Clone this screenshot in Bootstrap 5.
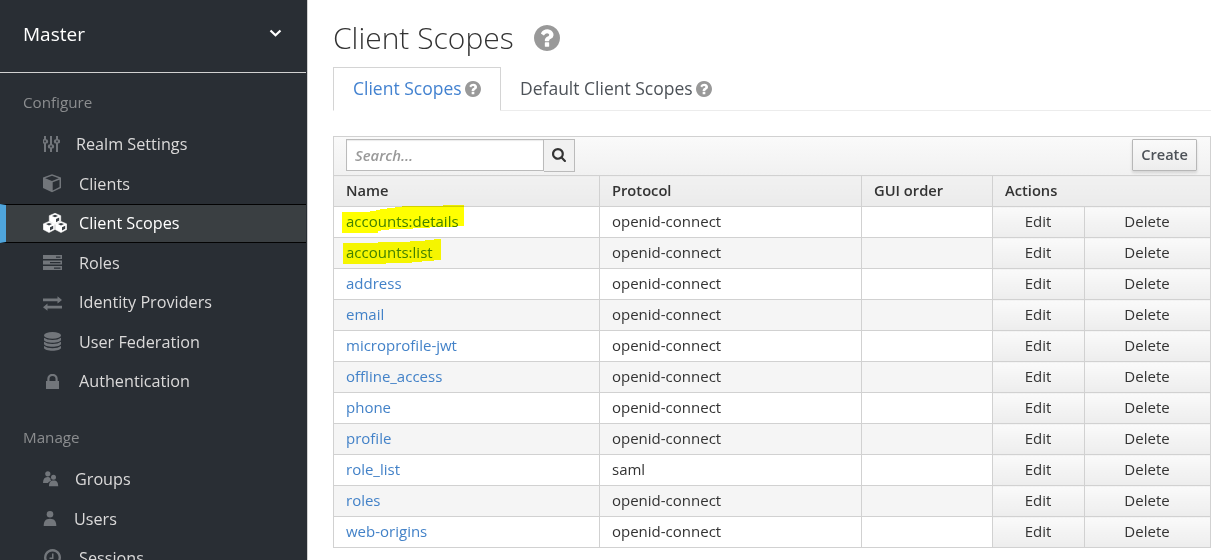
<!DOCTYPE html>
<html lang="en">
<head>
<meta charset="utf-8">
<title>Client Scopes</title>
<link href="https://cdn.jsdelivr.net/npm/bootstrap@5.3.0/dist/css/bootstrap.min.css" rel="stylesheet">
<style>
body{font-family:"Open Sans",sans-serif;height:560px;overflow:hidden;color:#333;font-size:15px;line-height:20px}
svg{display:block;flex:none}
.sidebar{width:308px;height:560px;background:#292e34;border-right:1px solid #d1d1d1;overflow:hidden;color:#dbdada}
.realm{height:73px;width:306px;padding:0 24px 5px 23px;border-bottom:1px solid #d1d1d1;color:#fff;font-size:19px}
.group-title{font-size:15.2px;color:#8b8d8f;padding-left:23px;height:21px;line-height:19px}
.side-link{width:306px;height:39.5px;padding:0 0 1.5px 43px;font-size:16.2px;color:#dbdada;text-decoration:none}
.side-link svg{fill:#72767b}
.side-link.active{background:#3a3f42;color:#fff;border-top:1px solid #030303;border-bottom:1px solid #030303;height:39px;margin-bottom:.5px;border-left:6px solid #4fa5dc;padding-left:37px}
.side-link.active svg{fill:#fff}
.ico{width:36px}
main{padding:0 11px 0 25px;min-width:0}
h1{font-weight:300;font-size:30px;line-height:40px;margin:18px 0 9px;color:#333}
.scope-tabs{border-bottom:1px solid #ececec;height:44px;font-size:17.5px;--bs-nav-tabs-border-width:0}
.scope-tabs .nav-link{padding:0 19px 1px;height:44px;border:1px solid transparent;border-radius:0;color:#4d5258;margin:0}
.scope-tabs .nav-link.active{border-color:#d4d4d4 #d4d4d4 #fff;color:#4382d0;background:#fff}
.scope-tabs span{padding-bottom:1px}
.panel{margin-top:25px;border:1px solid #d1d1d1;border-bottom:0;position:relative}
.tools{height:38px;padding:2px 13px 0 12px;background:linear-gradient(#fafafa,#f1f1f1)}
.tools .form-control{width:198px;height:32px;border:1px solid #bbb;border-radius:0;font-size:14.9px;font-style:italic;font-weight:600;padding:0 8px;box-shadow:inset 0 1px 1px rgba(0,0,0,.08);flex:none}
.tools .form-control::placeholder{color:#999;opacity:1}
.find{width:31px;height:33px;border:1px solid #bbb;border-left:0;border-radius:0;padding:0 1px 1px 0;background:#f1f1f1}
.create{width:65px;height:32px;border:1px solid #b7b7b7;border-radius:1px;padding:0;background:linear-gradient(#fafafa,#ededed);font-weight:600;font-size:14.6px;color:#4d5258;box-shadow:0 2px 3px rgba(3,3,3,.12)}
.scopes{table-layout:fixed;width:878px;margin:0 0 0 -1px;border-collapse:collapse;color:#333}
.scopes th,.scopes td{height:31px;padding:0 12px 2px;border:1px solid #d1d1d1;line-height:20px;vertical-align:middle}
.scopes th{font-weight:600;font-size:14.7px;background:linear-gradient(#f1f1f1,#ebebeb)}
.scopes tbody tr:nth-child(even){background:#f5f5f5}
.scopes a{color:#4382c8;text-decoration:none}
.scopes td.act{text-align:center;background:linear-gradient(#fafafa,#ededed);padding:0 1px 2px 0}
.marker{position:absolute;left:8px;top:67px;mix-blend-mode:multiply;pointer-events:none}
</style>
</head>
<body class="d-flex bg-white">
<svg width="0" height="0" class="position-absolute"><symbol id="help" viewBox="128 128 1536 1536"><path d="M1024 1376v-192q0-14-9-23t-23-9h-192q-14 0-23 9t-9 23v192q0 14 9 23t23 9h192q14 0 23-9t9-23zm256-672q0-88-55.5-163t-138.5-116-170-41q-243 0-371 213-15 24 8 42l132 100q7 6 19 6 16 0 25-12 53-68 86-92 34-24 86-24 48 0 85.5 26t37.5 59q0 38-20 61t-68 45q-63 28-115.5 86.5t-52.5 125.5v36q0 14 9 23t23 9h192q14 0 23-9t9-23q0-19 21.5-49.5t54.5-49.5q32-18 49-28.5t46-35 44.5-48 28-60.5 12.5-81zm384 192q0 209-103 385.5t-279.5 279.5-385.5 103-385.5-103-279.5-279.5-103-385.5 103-385.5 279.5-279.5 385.5-103 385.5 103 279.5 279.5 103 385.5z"/></symbol></svg>
<nav class="sidebar flex-shrink-0">
  <div class="realm d-flex align-items-center justify-content-between"><span>Master</span>
    <svg width="13" height="9" viewBox="0 0 13 9"><path d="M1.5 1.5 6.5 6.3 11.500 1.500" fill="none" stroke="#fff" stroke-width="2.2"/></svg></div>
  <div class="group-title" style="margin:20px 0 11px">Configure</div>
  <div class="nav flex-column flex-nowrap">
    <a class="side-link d-flex align-items-center" href="#"><span class="ico" style="width:33px"><svg width="17" height="17"><path fill-rule="evenodd" d="M1 0h2v3.200a2.200 2.200 0 0 1 0 4.400V16H1V7.600a2.200 2.200 0 0 1 0-4.400zM1.200 4.600v1.600h1.600v-1.600zM7 0h2v8.200a2.200 2.200 0 0 1 0 4.400V16H7v-3.400a2.200 2.200 0 0 1 0-4.400zM7.200 9.600v1.600h1.600V9.600zM13 0h2v3.200a2.200 2.200 0 0 1 0 4.400V16h-2V7.600a2.200 2.200 0 0 1 0-4.400zM13.200 4.600v1.600h1.600v-1.600z"/></svg></span>Realm Settings</a>
    <a class="side-link d-flex align-items-center" href="#"><span class="ico"><svg width="19" height="19"><path fill-rule="evenodd" d="M9 .3 18 3.600V14L9 18.300 0 14V3.600zM9 1.800 2.200 4.300 9 6.900l6.800-2.600zM9.700 8.300v8.100l6.800-3.300V5.700z"/></svg></span>Clients</a>
    <a class="side-link active d-flex align-items-center" href="#"><span class="ico"><svg width="24" height="20" viewBox="0 0 24 20"><defs><g id="cube"><path d="M6 0 11.700 2.400V8L6 11 .3 8V2.400z" stroke="#fff" stroke-width=".6" stroke-linejoin="round"/><path d="M6 1.500 9 2.600 6 3.900 3 2.600zM7 5.700l3.200-1.400v3L7 8.900z" fill="#393f44"/></g></defs><use href="#cube" x="6" y=".3"/><use href="#cube" x="0" y="8.500"/><use href="#cube" x="12" y="8.500"/></svg></span>Client Scopes</a>
    <a class="side-link d-flex align-items-center" href="#"><span class="ico"><svg width="19" height="15"><path fill-rule="evenodd" d="M0 0h19v4H0zM13 1.400v1.300h4.500V1.400zM0 5.500h19v4H0zM7 6.900v1.300h10.500V6.900zM0 11h19v4H0zM11 12.400v1.300h6.500v-1.300z"/></svg></span>Roles</a>
    <a class="side-link d-flex align-items-center" href="#"><span class="ico"><svg width="19" height="15" style="margin-top:3px"><path d="M0 2.500h14.500V.3L19 4l-4.500 3.600V5.300H0zM19 9.800H4.500V7.500L0 11.200l4.500 3.600v-2.200H19z"/></svg></span>Identity Providers</a>
    <a class="side-link d-flex align-items-center" href="#"><span class="ico"><svg width="19" height="19"><ellipse cx="9.500" cy="3.400" rx="8.500" ry="3.300"/><path d="M1 5.700q3 2.300 8.500 2.300T18 5.700v2c0 4-17 4-17 0zM1 9.800q3 2.300 8.500 2.300T18 9.800v2c0 4-17 4-17 0zM1 13.900q3 2.300 8.500 2.300t8.500-2.300v1.800c0 4-17 4-17 0z"/></svg></span>User Federation</a>
    <a class="side-link d-flex align-items-center" href="#"><span class="ico"><svg width="19" height="15"><path fill-rule="evenodd" d="M4.300 7V4.800a5.200 5 0 0 1 10.400 0V7H16v8H3V7zM6.500 7h6V4.800a3 2.900 0 0 0-6 0z"/></svg></span>Authentication</a>
  </div>
  <div class="group-title" style="margin:26px 0 11.500px">Manage</div>
  <div class="nav flex-column flex-nowrap">
    <a class="side-link d-flex align-items-center" href="#"><span class="ico" style="width:32px"><svg width="16" height="16"><circle cx="4.800" cy="2.800" r="2.600"/><circle cx="10.500" cy="6.300" r="2.500"/><path d="M0 12c0-4 1.500-6 4.500-6 1.400 0 2.500.6 3 1.400-.2 1 .1 1.700.8 2.300C6.500 10.200 5.600 11 5 12zM6 15.300c0-4 1.500-5.800 4.700-5.800s4.500 1.800 4.500 5.800z"/></svg></span>Groups</a>
    <a class="side-link d-flex align-items-center" href="#"><span class="ico" style="width:31px"><svg width="14" height="15"><circle cx="7" cy="3.300" r="3.300"/><path d="M.7 15c0-4.500 1.600-7.300 6.300-7.300s6.300 2.800 6.300 7.300z"/></svg></span>Users</a>
    <a class="side-link d-flex align-items-center" href="#"><span class="ico"><svg width="18" height="18"><path fill-rule="evenodd" d="M9.500 0a8.500 8.500 0 1 0 .01 0zM9.500 2.400a6.100 6.100 0 1 1-.01 0zM9 4.500h1.500V10H6.500V8.600H9z"/></svg></span>Sessions</a>
  </div>
</nav>
<main class="flex-grow-1">
  <h1 class="d-flex align-items-center"><span>Client Scopes</span><svg width="26" height="26" fill="#999" style="margin-left:20px"><use href="#help"/></svg></h1>
  <ul class="nav nav-tabs scope-tabs flex-nowrap">
    <li class="nav-item"><a class="nav-link active d-flex align-items-center" style="width:168px" href="#"><span style="width:112px" class="text-nowrap">Client Scopes</span><svg width="16" height="16" fill="#999"><use href="#help"/></svg></a></li>
    <li class="nav-item"><a class="nav-link d-flex align-items-center" style="padding-left:18px" href="#"><span style="width:176px" class="text-nowrap">Default Client Scopes</span><svg width="16" height="16" fill="#999"><use href="#help"/></svg></a></li>
  </ul>
  <section class="panel">
    <div class="tools d-flex align-items-start">
      <input class="form-control" placeholder="Search..." aria-label="Search">
      <button class="btn find d-flex align-items-center justify-content-center" aria-label="Find"><svg width="14" height="14" viewBox="64 128 1664 1664" fill="#333"><path d="M1216 832q0-185-131.500-316.500t-316.500-131.500-316.500 131.500-131.500 316.500 131.500 316.500 316.500 131.500 316.500-131.500 131.500-316.500zm512 832q0 52-38 90t-90 38q-54 0-90-38l-343-342q-179 124-399 124-143 0-273.500-55.500t-225-150-150-225-55.500-273.500 55.500-273.500 150-225 225-150 273.500-55.500 273.500 55.500 225 150 150 225 55.500 273.500q0 220-124 399l343 343q37 37 37 90z"/></svg></button>
      <button class="btn create ms-auto">Create</button>
    </div>
    <table class="scopes">
      <colgroup><col style="width:266px"><col style="width:262px"><col style="width:131px"><col style="width:92px"><col style="width:126px"></colgroup>
      <thead><tr><th>Name</th><th>Protocol</th><th>GUI order</th><th colspan="2">Actions</th></tr></thead>
      <tbody>
        <tr><td><a href="#">accounts:details</a></td><td>openid-connect</td><td></td><td class="act">Edit</td><td class="act">Delete</td></tr>
        <tr><td><a href="#">accounts:list</a></td><td>openid-connect</td><td></td><td class="act">Edit</td><td class="act">Delete</td></tr>
        <tr><td><a href="#">address</a></td><td>openid-connect</td><td></td><td class="act">Edit</td><td class="act">Delete</td></tr>
        <tr><td><a href="#">email</a></td><td>openid-connect</td><td></td><td class="act">Edit</td><td class="act">Delete</td></tr>
        <tr><td><a href="#">microprofile-jwt</a></td><td>openid-connect</td><td></td><td class="act">Edit</td><td class="act">Delete</td></tr>
        <tr><td><a href="#">offline_access</a></td><td>openid-connect</td><td></td><td class="act">Edit</td><td class="act">Delete</td></tr>
        <tr><td><a href="#">phone</a></td><td>openid-connect</td><td></td><td class="act">Edit</td><td class="act">Delete</td></tr>
        <tr><td><a href="#">profile</a></td><td>openid-connect</td><td></td><td class="act">Edit</td><td class="act">Delete</td></tr>
        <tr><td><a href="#">role_list</a></td><td>saml</td><td></td><td class="act">Edit</td><td class="act">Delete</td></tr>
        <tr><td><a href="#">roles</a></td><td>openid-connect</td><td></td><td class="act">Edit</td><td class="act">Delete</td></tr>
        <tr><td><a href="#">web-origins</a></td><td>openid-connect</td><td></td><td class="act">Edit</td><td class="act">Delete</td></tr>
      </tbody>
    </table>
    <svg class="marker" width="124" height="62" fill="#ff0" shape-rendering="crispEdges"><path d="M0 8H28V7H34V6H38V5H45V4H53V3H60V2H101V1H122V22H115V23H88V24H71V25H47V26H39V27H36V29H0zM1 39H36V38H68V37H83V36H92V35H99V56H92V57H80V58H70V59H44V60H1z"/></svg>
  </section>
</main>
<script src="https://cdn.jsdelivr.net/npm/bootstrap@5.3.0/dist/js/bootstrap.bundle.min.js"></script>
</body>
</html>
